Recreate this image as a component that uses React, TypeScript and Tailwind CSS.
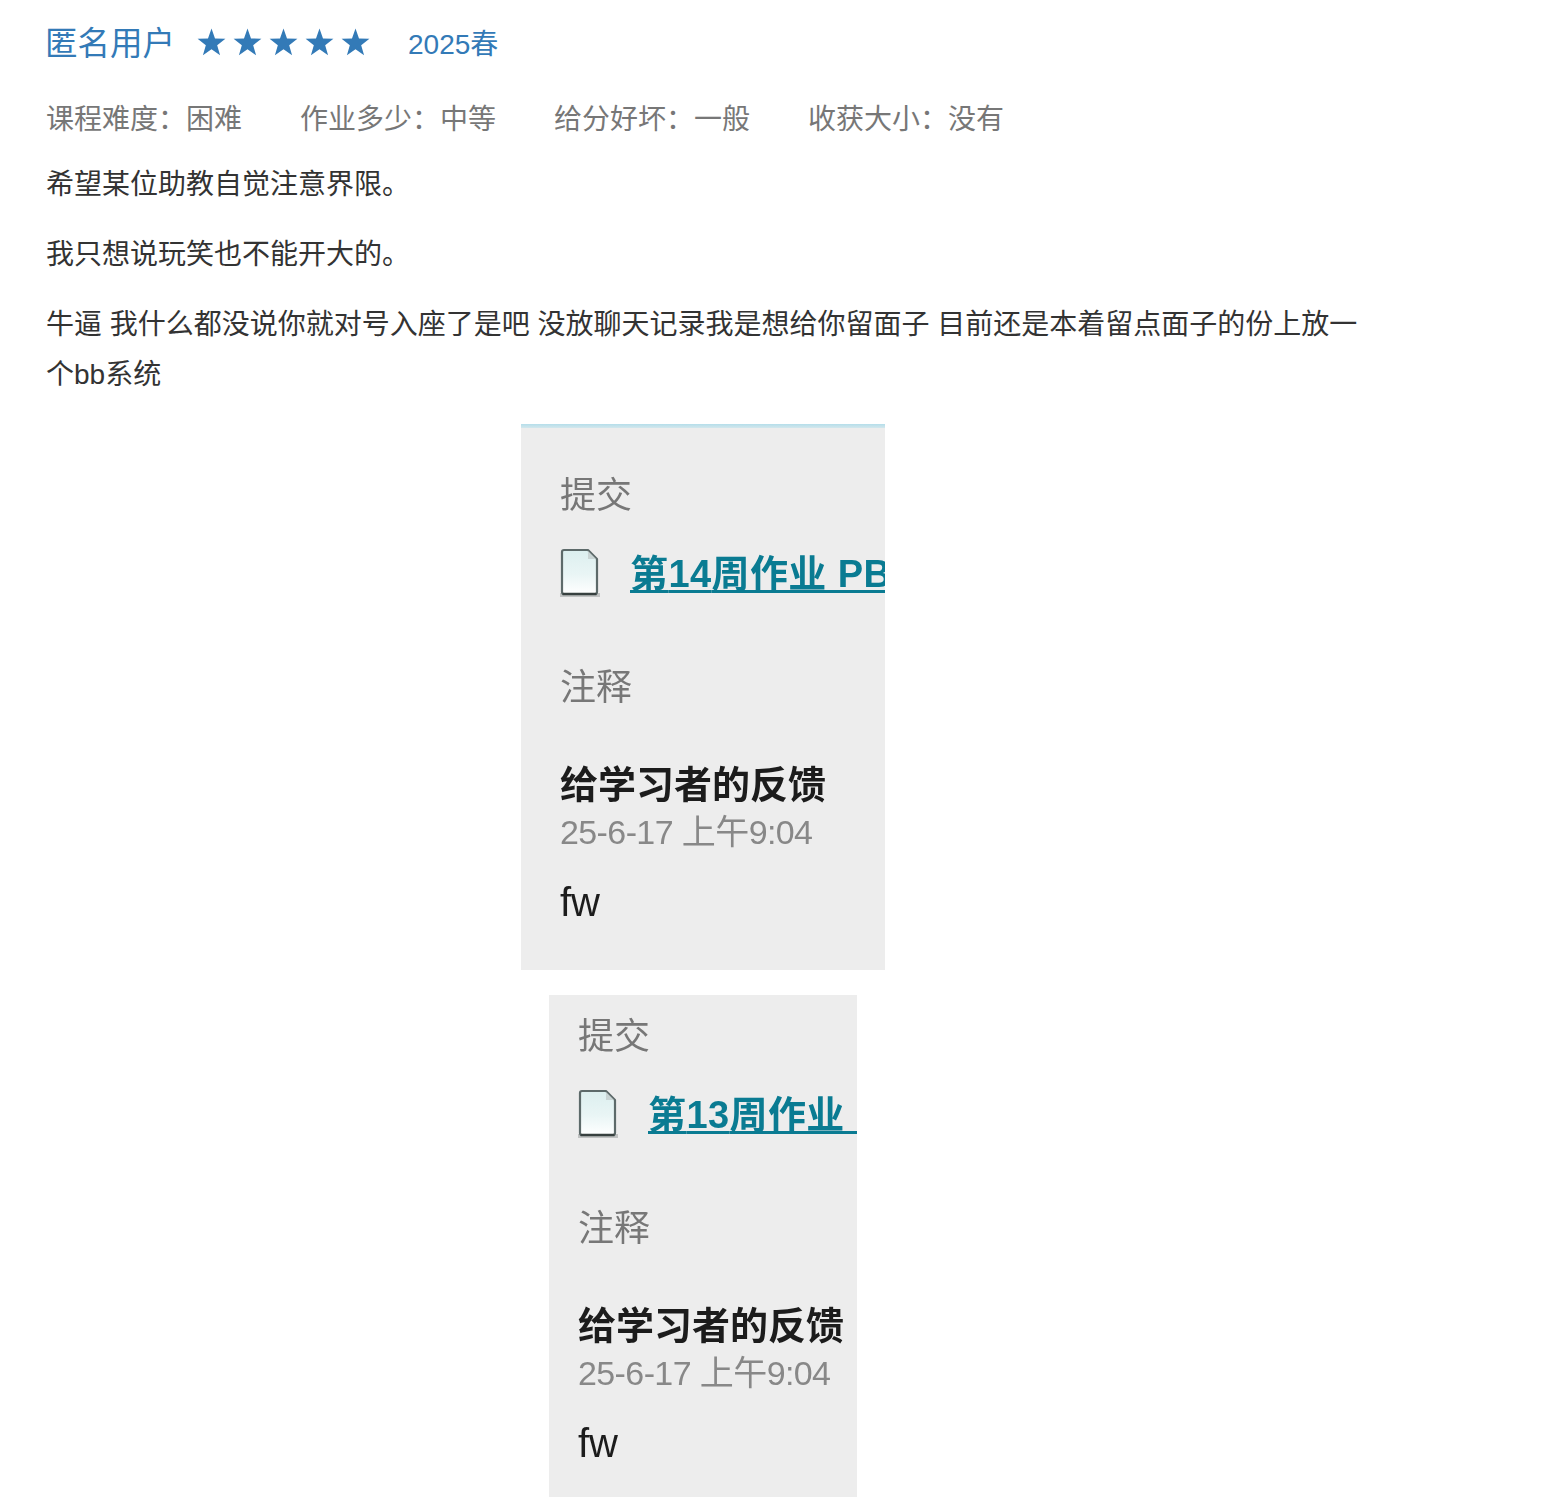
import React from 'react';

const fontStack = "font-['Liberation_Sans','Noto_Sans_CJK_SC',sans-serif]";

function FileIcon({ id }: { id: string }) {
  return (
    <svg width="40" height="50" viewBox="0 0 40 50" className="shrink-0 -mt-[3px]">
      <defs>
        <linearGradient id={id} x1="0" y1="0" x2="0" y2="1">
          <stop offset="0" stopColor="#dcefef" />
          <stop offset="0.55" stopColor="#e9f5f5" />
          <stop offset="1" stopColor="#ffffff" />
        </linearGradient>
      </defs>
      <rect x="0" y="45" width="40" height="4" fill="#9a9f9f" opacity="0.55" />
      <path d="M4 2 H28 L37 11 V44 Q37 46 35 46 H4 Q2 46 2 44 V4 Q2 2 4 2 Z" fill={`url(#${id})`} stroke="#5d6a6a" strokeWidth="2.2" strokeLinejoin="round" />
      <path d="M2.5 46 H36.5" stroke="#37403f" strokeWidth="2.4" />
      <path d="M28 3 V11 H36 Z" fill="#c9d4d4" />
    </svg>
  );
}

// screenshot pasted into the review, same content in both
function SubmissionShot({
  week,
  iconId,
  className,
  topBar,
}: {
  week: string;
  iconId: string;
  className: string;
  topBar?: boolean;
}) {
  return (
    <div className={`overflow-hidden bg-[#ededed] ${className}`}>
      {topBar && <div className="h-[4px] bg-gradient-to-b from-[#b5deea] to-[#d3e7ec]" />}
      <div className={`blur-[0.6px] whitespace-nowrap ${topBar ? 'pt-[44px] pb-[44px] pl-[39px]' : 'pt-[18px] pb-[30px] pl-[29px]'}`}>
        <div className="h-[48px] text-[36px] leading-[48px] text-[#777777]">提交</div>
        <div className="mt-[30px] h-[48px] flex items-center">
          <div className="w-[70px] shrink-0">
            <FileIcon id={iconId} />
          </div>
          <span className="text-[38px] leading-[48px] font-bold tracking-[0.4px] text-[#0a7b92] underline decoration-[3px] underline-offset-[3px]">
            第{week}周作业 PB
          </span>
        </div>
        <div className="mt-[66px] h-[48px] text-[36px] leading-[48px] text-[#777777]">注释</div>
        <div className="mt-[49px] h-[48px] text-[38px] leading-[48px] font-bold text-[#1c1c1c]">给学习者的反馈</div>
        <div className="-mt-[1px] h-[48px] text-[34px] leading-[48px] tracking-[-0.6px] text-[#888888]">25-6-17 上午9:04</div>
        <div className="mt-[22px] h-[48px] text-[40px] leading-[48px] text-[#1c1c1c]">fw</div>
      </div>
    </div>
  );
}

function Star() {
  return (
    <svg width="29" height="29" viewBox="0 0 24 24" fill="#337ab7">
      <polygon points="12,0.5 14.9,8.6 23.5,8.9 16.7,14.2 19.1,22.5 12,17.6 4.9,22.5 7.3,14.2 0.5,8.9 9.1,8.6" />
    </svg>
  );
}

export default function App() {
  return (
    <div className={`${fontStack} min-h-[1507px] bg-white pl-[46px] pt-[18px] pb-[10px]`}>
      <div className="w-[1314px]">
        {/* header line */}
        <div className="flex items-center h-[50px] text-[#337ab7]">
          <span className="text-[32.5px] leading-[50px] -ml-[1px] pt-[1px]">匿名用户</span>
          <div className="ml-[22px] mb-[2px] flex gap-[7px]">
            <Star />
            <Star />
            <Star />
            <Star />
            <Star />
          </div>
          <span className="ml-[38px] pt-[4px] text-[28px] leading-[50px]">2025春</span>
        </div>

        {/* ratings */}
        <div className="mt-[27px] flex gap-[58px] text-[28px] leading-[50px] text-[#777777]">
          <span>课程难度：困难</span>
          <span>作业多少：中等</span>
          <span>给分好坏：一般</span>
          <span>收获大小：没有</span>
        </div>

        <div className="mt-[15px] text-[28px] leading-[50px] text-[#333333]">
          <p className="mb-[20px]">希望某位助教自觉注意界限。</p>
          <p className="mb-[20px]">我只想说玩笑也不能开大的。</p>
          <p>牛逼 我什么都没说你就对号入座了是吧 没放聊天记录我是想给你留面子 目前还是本着留点面子的份上放一个bb系统</p>
        </div>

        <div className="mt-[24px] flex flex-col items-center gap-[25px]">
          <SubmissionShot week="14" iconId="doc14" className="w-[364px] h-[546px]" topBar />
          <SubmissionShot week="13" iconId="doc13" className="w-[308px] h-[502px]" />
        </div>
      </div>
    </div>
  );
}
